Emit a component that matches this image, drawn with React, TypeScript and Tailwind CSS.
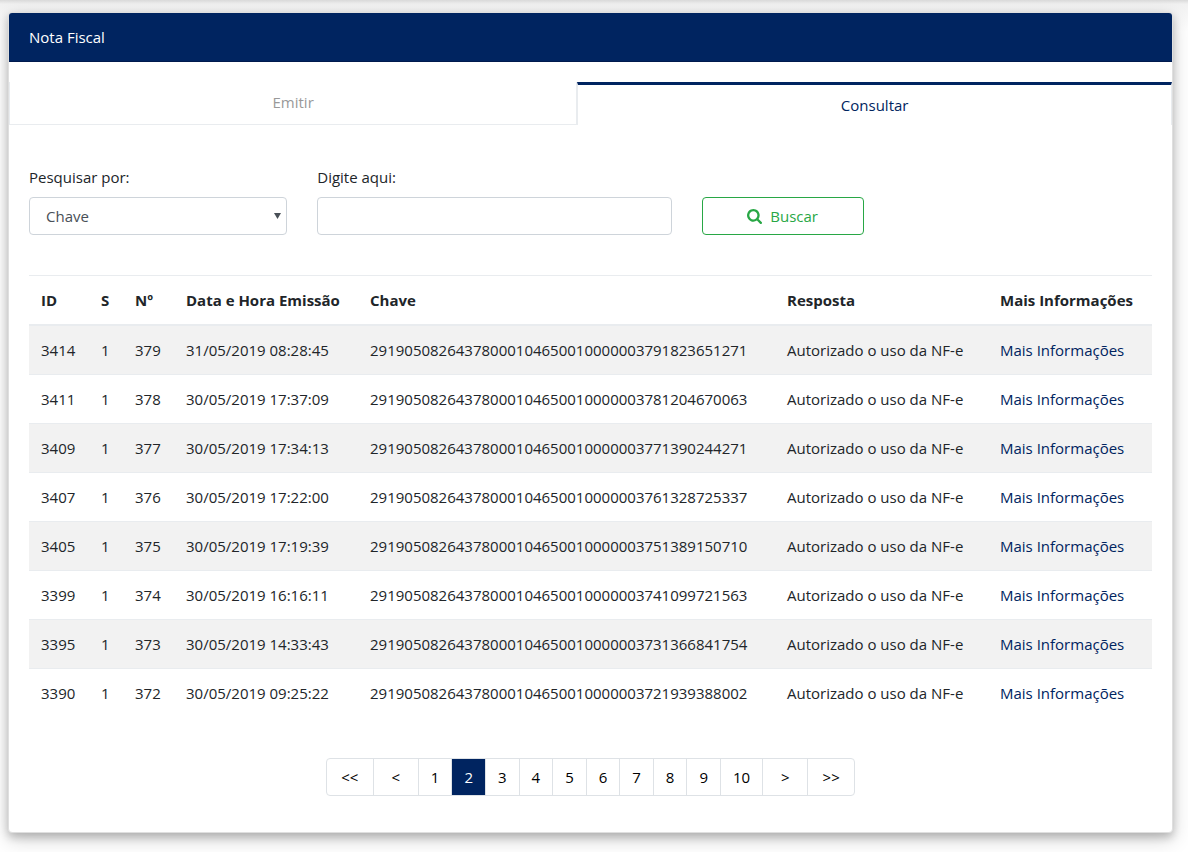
import { useState } from "react";

const COLUMNS = [
  { label: "ID", width: "w-[60px]" },
  { label: "S", width: "w-[34px]" },
  { label: "Nº", width: "w-[51px]" },
  { label: "Data e Hora Emissão", width: "w-[184px]" },
  { label: "Chave", width: "" },
  { label: "Resposta", width: "w-[213px]" },
  { label: "Mais Informações", width: "w-[164px]" },
];

const NOTAS = [
  { id: 3414, serie: 1, numero: 379, emissao: "31/05/2019 08:28:45", chave: "29190508264378000104650010000003791823651271" },
  { id: 3411, serie: 1, numero: 378, emissao: "30/05/2019 17:37:09", chave: "29190508264378000104650010000003781204670063" },
  { id: 3409, serie: 1, numero: 377, emissao: "30/05/2019 17:34:13", chave: "29190508264378000104650010000003771390244271" },
  { id: 3407, serie: 1, numero: 376, emissao: "30/05/2019 17:22:00", chave: "29190508264378000104650010000003761328725337" },
  { id: 3405, serie: 1, numero: 375, emissao: "30/05/2019 17:19:39", chave: "29190508264378000104650010000003751389150710" },
  { id: 3399, serie: 1, numero: 374, emissao: "30/05/2019 16:16:11", chave: "29190508264378000104650010000003741099721563" },
  { id: 3395, serie: 1, numero: 373, emissao: "30/05/2019 14:33:43", chave: "29190508264378000104650010000003731366841754" },
  { id: 3390, serie: 1, numero: 372, emissao: "30/05/2019 09:25:22", chave: "29190508264378000104650010000003721939388002" },
];

const PAGES = [1, 2, 3, 4, 5, 6, 7, 8, 9, 10];
const TABS = ["Emitir", "Consultar"];

const pageButton =
  "-ml-px h-[38px] border border-[#dee2e6] text-black hover:bg-gray-100";

function SearchIcon() {
  return (
    <svg viewBox="0 128 1664 1664" className="size-[15px] fill-current" aria-hidden="true">
      <path d="M1152 832q0-185-131.5-316.5t-316.5-131.5-316.5 131.5-131.5 316.5 131.5 316.5 316.5 131.5 316.5-131.5 131.5-316.5zm512 832q0 52-38 90t-90 38q-54 0-90-38l-343-342q-179 124-399 124-143 0-273.5-55.5t-225-150-150-225-55.5-273.5 55.5-273.5 150-225 225-150 273.5-55.5 273.5 55.5 225 150 150 225 55.5 273.5q0 220-124 399l343 343q37 37 37 90z" />
    </svg>
  );
}

function Tabs() {
  const [active, setActive] = useState("Consultar");

  return (
    <div className="mt-5 flex" role="tablist">
      {TABS.map((tab) => (
        <button
          key={tab}
          type="button"
          role="tab"
          aria-selected={tab === active}
          onClick={() => setActive(tab)}
          className={
            tab === active
              ? "flex-auto border-x border-t-3 border-x-[#e9ecef] border-t-[#002460] px-4 py-2 text-[#002460]"
              : "flex flex-auto items-start justify-center border-x border-b border-[#e9ecef] px-4 pt-2 text-[#999999]"
          }
        >
          {tab}
        </button>
      ))}
    </div>
  );
}

function SearchForm() {
  return (
    <form
      className="grid grid-cols-12 items-end gap-x-[30px]"
      onSubmit={(e) => e.preventDefault()}
    >
      <div className="col-span-3">
        <label htmlFor="campo" className="mb-2 block">
          Pesquisar por:
        </label>
        <div className="relative">
          <select
            id="campo"
            className="block h-[38px] w-full appearance-none rounded border border-[#ced4da] bg-white px-4 text-[#495057]"
          >
            <option>Chave</option>
            <option>ID</option>
            <option>Resposta</option>
          </select>
          <svg
            viewBox="0 0 7 6"
            className="pointer-events-none absolute top-4 right-1.5 h-1.5 w-[7px] fill-[#495057]"
            aria-hidden="true"
          >
            <path d="M0 0h7L3.5 6z" />
          </svg>
        </div>
      </div>
      <div className="col-span-4">
        <label htmlFor="termo" className="mb-2 block">
          Digite aqui:
        </label>
        <input
          id="termo"
          type="text"
          className="block h-[38px] w-full rounded border border-[#ced4da] px-3 text-[#495057]"
        />
      </div>
      <button
        type="submit"
        className="col-span-2 flex h-[38px] items-center justify-center gap-2 rounded border border-[#28a745] text-[#28a745]"
      >
        <SearchIcon />
        Buscar
      </button>
    </form>
  );
}

function NotasTable() {
  return (
    <table className="mt-10 w-full table-fixed border-collapse text-left">
      <thead>
        <tr>
          {COLUMNS.map((col) => (
            <th
              key={col.label}
              scope="col"
              className={`border-t border-b-2 border-[#e9ecef] px-3 py-3 font-bold whitespace-nowrap ${col.width}`}
            >
              {col.label}
            </th>
          ))}
        </tr>
      </thead>
      <tbody>
        {NOTAS.map((nota) => (
          <tr
            key={nota.id}
            className="odd:bg-[#f2f2f2] [&>td]:border-t [&>td]:border-[#e9ecef] [&>td]:p-3 [&>td]:whitespace-nowrap"
          >
            <td>{nota.id}</td>
            <td>{nota.serie}</td>
            <td>{nota.numero}</td>
            <td>{nota.emissao}</td>
            <td>{nota.chave}</td>
            <td>Autorizado o uso da NF-e</td>
            <td>
              <a href="#" className="text-[#002460] hover:underline">
                Mais Informações
              </a>
            </td>
          </tr>
        ))}
      </tbody>
    </table>
  );
}

function Pagination() {
  const [page, setPage] = useState(2);
  const last = PAGES.length;

  return (
    <nav className="mt-[41px] flex justify-center pl-px" aria-label="Paginação">
      <button type="button" onClick={() => setPage(1)} className={`${pageButton} w-12 rounded-l`}>
        &lt;&lt;
      </button>
      <button
        type="button"
        onClick={() => setPage(Math.max(1, page - 1))}
        className={`${pageButton} w-[46px]`}
      >
        &lt;
      </button>
      {PAGES.map((n) => (
        <button
          key={n}
          type="button"
          aria-current={n === page ? "page" : undefined}
          onClick={() => setPage(n)}
          className={
            n === page
              ? "-ml-px h-[38px] border border-[#dee2e6] bg-[#002460] px-3 text-white"
              : `${pageButton} px-3`
          }
        >
          {n}
        </button>
      ))}
      <button
        type="button"
        onClick={() => setPage(Math.min(last, page + 1))}
        className={`${pageButton} w-[46px]`}
      >
        &gt;
      </button>
      <button type="button" onClick={() => setPage(last)} className={`${pageButton} w-12 rounded-r`}>
        &gt;&gt;
      </button>
    </nav>
  );
}

export default function App() {
  return (
    <div className="min-h-screen overflow-hidden bg-white bg-[linear-gradient(to_bottom,#dadada_0,#f1f1f1_4px,#f6f6f6_14px,#ffffff_32px)] font-['Open_Sans','Noto_Sans',sans-serif] text-[15px] leading-6 text-[#212529]">
      <main className="pt-3 pr-[15px] pb-[18px] pl-2">
        <section className="rounded border border-[#dfdfdf] bg-white shadow-[0_4px_8px_0_rgba(0,0,0,0.2),0_6px_20px_0_rgba(0,0,0,0.19)]">
          <h1 className="rounded-t-[3px] border-b border-[#001a4d] bg-[#002460] px-5 py-3 text-white">
            Nota Fiscal
          </h1>
          <Tabs />
          <div className="px-5 pt-10 pb-9">
            <SearchForm />
            <NotasTable />
            <Pagination />
          </div>
        </section>
      </main>
    </div>
  );
}
